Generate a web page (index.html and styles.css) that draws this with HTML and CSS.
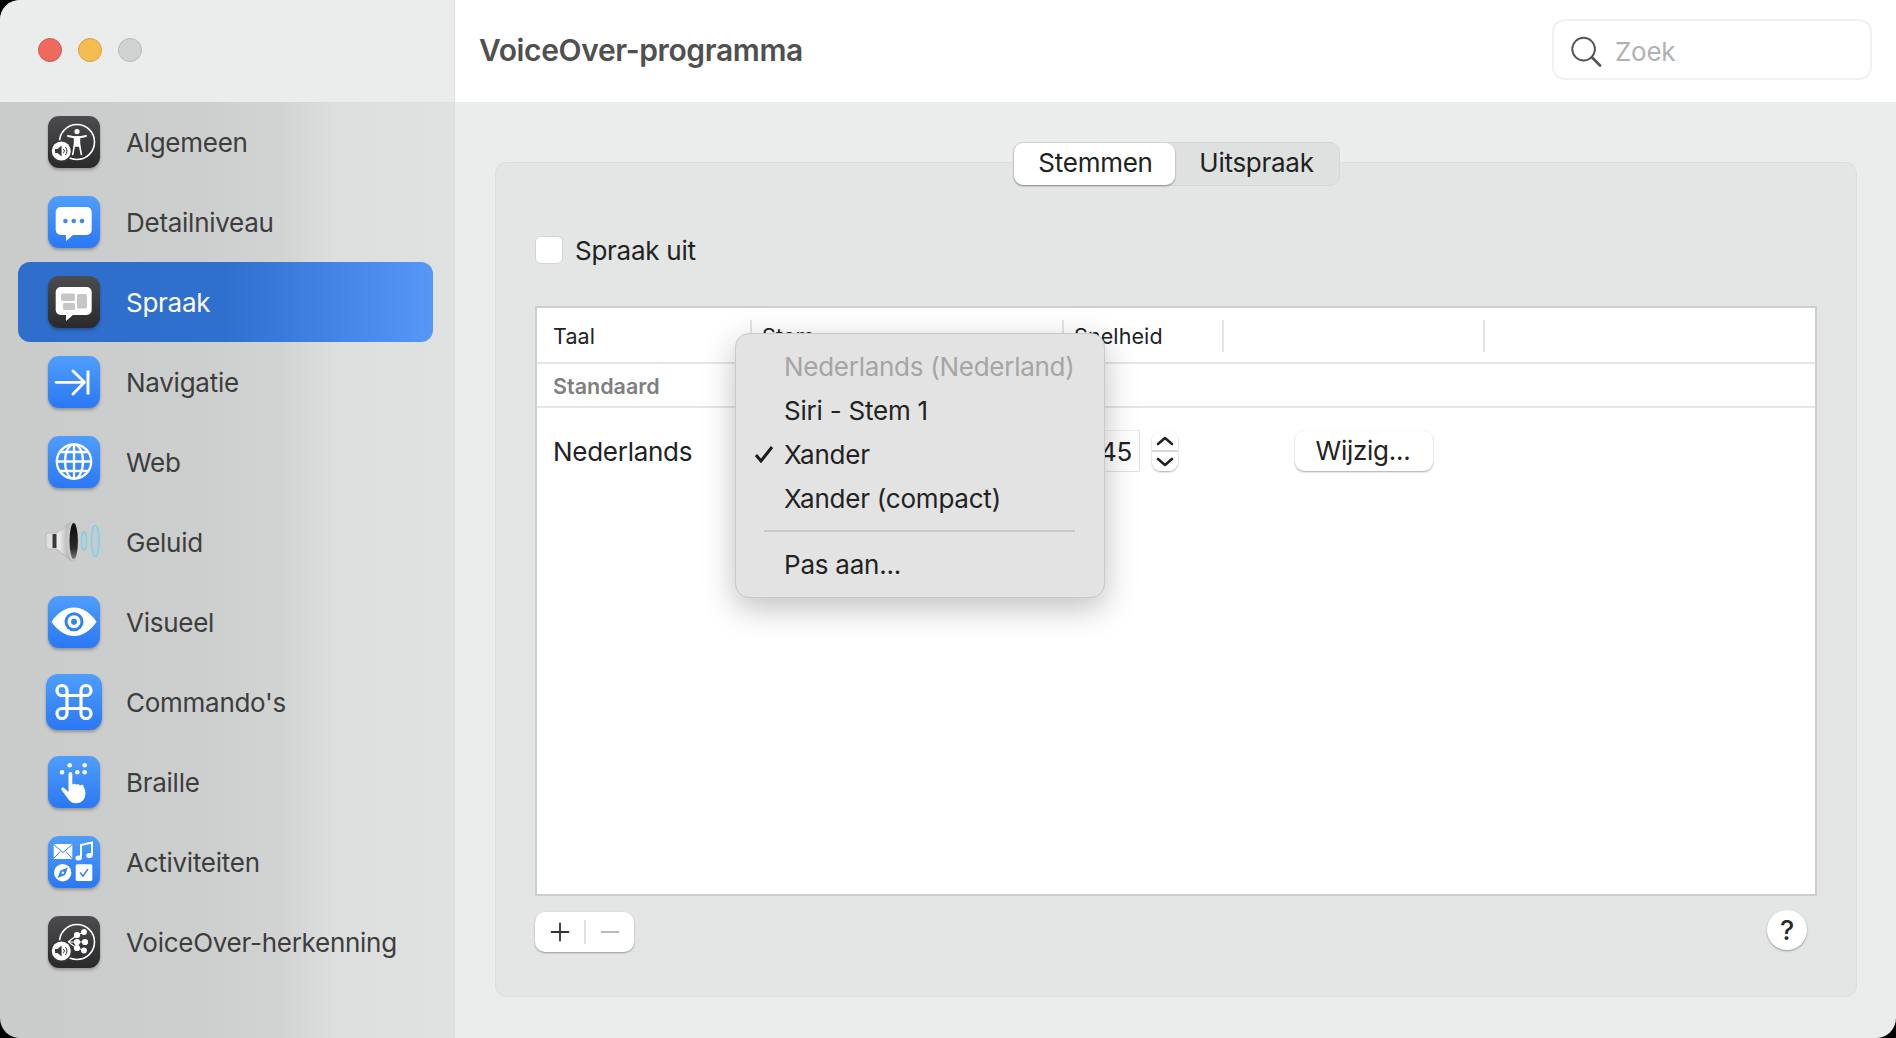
FILE: index.html
```html
<!DOCTYPE html>
<html lang="nl">
<head>
<meta charset="utf-8">
<title>VoiceOver-programma</title>
<link rel="stylesheet" href="styles.css">
</head>
<body>
<svg class="defs" width="0" height="0" aria-hidden="true">
  <defs>
    <linearGradient id="blue" x1="0" y1="0" x2="0" y2="1"><stop offset="0" stop-color="#4f9efc"/><stop offset="1" stop-color="#2a78f3"/></linearGradient>
    <linearGradient id="dark" x1="0" y1="0" x2="0" y2="1"><stop offset="0" stop-color="#4c4c4e"/><stop offset="1" stop-color="#2a2a2c"/></linearGradient>
    <linearGradient id="cone" x1="0" y1="0" x2="1" y2="0"><stop offset="0" stop-color="#dcdcdc"/><stop offset=".45" stop-color="#ececec"/><stop offset="1" stop-color="#8f8f8f"/></linearGradient>
    <linearGradient id="hole" x1="0" y1="0" x2="0" y2="1"><stop offset="0" stop-color="#0c0c0c"/><stop offset=".7" stop-color="#2a2a2a"/><stop offset="1" stop-color="#777"/></linearGradient>
    <g id="badge">
      <circle cx="13.3" cy="35" r="11" fill="#38383a"/>
      <circle cx="13.3" cy="35" r="9.5" fill="#fff"/>
      <path d="M7 33h2.6l4-3.4v10.8l-4-3.4H7z" fill="#38383a"/>
      <path d="M15.4 32.8a3.2 3.2 0 0 1 0 4.4M17.4 31a6 6 0 0 1 0 8" fill="none" stroke="#38383a" stroke-width="1"/>
    </g>
  </defs>
</svg>
<div class="window">
  <aside class="sidebar">
    <div class="traffic">
      <span class="light red"></span>
      <span class="light yellow"></span>
      <span class="light grey"></span>
    </div>
    <nav class="nav">
      <a class="row">
        <span class="slot"><svg class="ico" viewBox="0 0 52 52"><rect width="52" height="52" rx="11" fill="url(#dark)"/>
          <circle cx="29" cy="26" r="17.5" fill="none" stroke="#fff" stroke-width="1.6"/>
          <circle cx="29" cy="15.6" r="2.6" fill="#fff"/>
          <path d="M20 20l6 1.2h6l6-1.2" fill="none" stroke="#fff" stroke-width="2" stroke-linecap="round"/>
          <path d="M26.6 21v8l-2 9.5M31.4 21v8l2 9.5M27 21h4v9h-4z" fill="#fff" stroke="#fff" stroke-width="1.6" stroke-linecap="round"/>
          <use href="#badge"/></svg></span>
        <span class="label">Algemeen</span>
      </a>
      <a class="row">
        <span class="slot"><svg class="ico" viewBox="0 0 52 52"><rect width="52" height="52" rx="11" fill="url(#blue)"/>
          <path d="M12.7 11h26a5 5 0 0 1 5 5v18a5 5 0 0 1-5 5H25l-7 6v-6h-5.300a5 5 0 0 1-5-5V16a5 5 0 0 1 5-5z" fill="#fff"/>
          <circle cx="17.4" cy="25" r="2.3" fill="#3b88f6"/><circle cx="25.700" cy="25" r="2.3" fill="#3b88f6"/><circle cx="34" cy="25" r="2.3" fill="#3b88f6"/></svg></span>
        <span class="label">Detailniveau</span>
      </a>
      <a class="row active">
        <span class="slot"><svg class="ico" viewBox="0 0 52 52"><rect width="52" height="52" rx="11" fill="url(#dark)"/>
          <path d="M12.7 11h26a5 5 0 0 1 5 5v18a5 5 0 0 1-5 5H25l-7 6v-6h-5.300a5 5 0 0 1-5-5V16a5 5 0 0 1 5-5z" fill="#fff"/>
          <rect x="13" y="17.500" width="14" height="7.500" rx="1.500" fill="#c6c6c6"/><rect x="15" y="27" width="12" height="7" rx="1.500" fill="#c6c6c6"/><rect x="29" y="18" width="10" height="14.500" rx="1.500" fill="#c6c6c6"/></svg></span>
        <span class="label">Spraak</span>
      </a>
      <a class="row">
        <span class="slot"><svg class="ico" viewBox="0 0 52 52"><rect width="52" height="52" rx="11" fill="url(#blue)"/>
          <path d="M8 26.300h28M25 15l11.500 11.300L25 38" fill="none" stroke="#fff" stroke-width="2.800" stroke-linecap="round" stroke-linejoin="round"/>
          <path d="M40 14.500v24" stroke="#fff" stroke-width="3"/></svg></span>
        <span class="label">Navigatie</span>
      </a>
      <a class="row">
        <span class="slot"><svg class="ico" viewBox="0 0 52 52"><rect width="52" height="52" rx="11" fill="url(#blue)"/>
          <g fill="none" stroke="#fff" stroke-width="2.300"><circle cx="26" cy="25.500" r="17.200"/><ellipse cx="26" cy="25.500" rx="9" ry="17.200"/><path d="M26 8.300v34.400M8.800 25.500h34.400M11.500 16h29M11.500 35h29"/></g></svg></span>
        <span class="label">Web</span>
      </a>
      <a class="row">
        <span class="slot"><svg class="ico bare" viewBox="-3 0 58 52">
          <path d="M-2 20q0-3 3-3h8L22 6.500q3-1.500 5 0V44q-2 1.500-5 0L9 33H1q-3 0-3-3z" fill="url(#cone)" stroke="#a9a9a9" stroke-width=".6"/>
          <path d="M4.500 18h4v14h-4z" fill="#3a3a3a"/>
          <ellipse cx="24.700" cy="25" rx="6" ry="20" fill="#c9c9c9"/>
          <ellipse cx="25.700" cy="25" rx="4.200" ry="18" fill="url(#hole)"/>
          <g fill="#8ed4e6" fill-opacity=".28" stroke="#84cfe3" stroke-width="1.500"><ellipse cx="36" cy="25" rx="2.600" ry="9.500"/><ellipse cx="47.300" cy="25" rx="4" ry="15.500"/></g></svg></span>
        <span class="label">Geluid</span>
      </a>
      <a class="row">
        <span class="slot"><svg class="ico" viewBox="0 0 52 52"><rect width="52" height="52" rx="11" fill="url(#blue)"/>
          <path d="M3.500 25.700C10 16 18 11.500 26 11.500s16 4.500 22.500 14.200C42 35.500 34 40 26 40S10 35.500 3.500 25.700z" fill="#fff"/>
          <circle cx="26" cy="25.700" r="9.500" fill="#3183f4"/><circle cx="26" cy="25.700" r="6.500" fill="#fff"/><circle cx="26" cy="25.700" r="3" fill="#3183f4"/></svg></span>
        <span class="label">Visueel</span>
      </a>
      <a class="row">
        <span class="slot"><svg class="ico large" viewBox="0 0 56 56"><rect width="56" height="56" rx="12" fill="url(#blue)"/>
          <path d="M21 21V16.500a5 5 0 1 0-5 5H40a5 5 0 1 0-5-5V39.500a5 5 0 1 0 5-5H16a5 5 0 1 0 5 5z" fill="none" stroke="#fff" stroke-width="3.200"/></svg></span>
        <span class="label">Commando's</span>
      </a>
      <a class="row">
        <span class="slot"><svg class="ico" viewBox="0 0 52 52"><rect width="52" height="52" rx="11" fill="url(#blue)"/>
          <g fill="#fff"><circle cx="21.700" cy="9.300" r="2.300"/><circle cx="14" cy="16.300" r="2.300"/><circle cx="29.300" cy="16.300" r="2.300"/><circle cx="36.700" cy="9.300" r="2.300"/><circle cx="36.700" cy="16.300" r="2.300"/>
          <path d="M20.500 18a1.900 1.900 0 0 1 3.800 0v10.500l1-.2a1.800 1.800 0 0 1 3 .3l.5.200a1.700 1.700 0 0 1 3 .6l.6.100a1.700 1.700 0 0 1 3.100 .8c1.800 3 2.400 7 1.600 10-1 4.200-4.500 7-9 7-4 0-6.500-2-8.500-5l-6-8.300c-1-1.500 1-3.300 2.500-2l4.400 4z"/></g></svg></span>
        <span class="label">Braille</span>
      </a>
      <a class="row">
        <span class="slot"><svg class="ico" viewBox="0 0 52 52"><rect width="52" height="52" rx="11" fill="url(#blue)"/>
          <rect x="5.700" y="8" width="18.600" height="15" rx="1" fill="#fff"/>
          <path d="M5.700 8.500l9.300 8 9.300-8M5.700 22.500l6.500-7M24.300 22.500l-6.500-7" fill="none" stroke="#3183f4" stroke-width="1"/>
          <path d="M33 21.500V9l11-2.500V19" fill="none" stroke="#fff" stroke-width="2"/>
          <ellipse cx="30.600" cy="22" rx="3.200" ry="2.500" fill="#fff"/><ellipse cx="41.400" cy="19.500" rx="3.200" ry="2.500" fill="#fff"/>
          <circle cx="14.700" cy="36.700" r="8.700" fill="#fff"/><path d="M20 31.500l-7.500 3-3 7.500 7.500-3z" fill="#3183f4"/><circle cx="14.700" cy="36.700" r="1.300" fill="#fff"/>
          <rect x="27.700" y="28.300" width="16.600" height="16.700" rx="1.500" fill="#fff"/>
          <path d="M32 36.500l3 3.500 5-7" fill="none" stroke="#3183f4" stroke-width="1.400"/></svg></span>
        <span class="label">Activiteiten</span>
      </a>
      <a class="row">
        <span class="slot"><svg class="ico" viewBox="0 0 52 52"><rect width="52" height="52" rx="11" fill="url(#dark)"/>
          <circle cx="29" cy="26" r="17.500" fill="none" stroke="#fff" stroke-width="1.600"/>
          <g stroke="#fff" stroke-width="1.200" fill="#fff"><path d="M20 26l9-7 7-3M20 26h16M20 26l9 6 6 2" fill="none"/><circle cx="29" cy="19" r="2.500"/><circle cx="36" cy="16" r="2.300"/><circle cx="29" cy="26" r="2.500"/><circle cx="37" cy="26" r="2.500"/><circle cx="29" cy="32" r="2.500"/><circle cx="36" cy="34.500" r="2.300"/></g>
          <use href="#badge"/></svg></span>
        <span class="label">VoiceOver-herkenning</span>
      </a>
    </nav>
  </aside>
  <main class="main">
    <header class="header">
      <h1 class="title">VoiceOver-programma</h1>
      <div class="search">
        <svg class="search-icon" viewBox="0 0 32 32"><circle cx="13" cy="13" r="11.700" fill="none" stroke="#555" stroke-width="2"/><path d="M21.500 21.500L30 30" stroke="#555" stroke-width="2.800" stroke-linecap="round"/></svg>
        <span class="search-text">Zoek</span>
      </div>
    </header>
    <section class="content">
      <div class="panel">
        <div class="tabs">
          <span class="tab selected">Stemmen</span>
          <span class="tab">Uitspraak</span>
        </div>
        <label class="check"><span class="box"></span><span>Spraak uit</span></label>
        <div class="table">
          <div class="thead">
            <span class="th c1">Taal</span>
            <span class="th c2">Stem</span>
            <span class="th c3">Snelheid</span>
            <span class="th c4"></span>
            <span class="th c5"></span>
          </div>
          <div class="group">Standaard</div>
          <div class="tr">
            <span class="lang">Nederlands</span>
            <span class="rate">
              <span class="field">45</span>
              <span class="stepper">
                <svg viewBox="0 0 26 40"><path d="M6 13l7-6 7 6M6 28l7 6 7-6" fill="none" stroke="#222" stroke-width="2.600" stroke-linecap="round" stroke-linejoin="round"/></svg>
              </span>
            </span>
            <span class="change">Wijzig...</span>
          </div>
        </div>
        <div class="footer">
          <div class="addremove">
            <svg class="pm" viewBox="0 0 24 24"><path d="M2 12h20M12 2v20" stroke="#333" stroke-width="2"/></svg>
            <span class="pm-sep"></span>
            <svg class="pm" viewBox="0 0 24 24"><path d="M2 12h20" stroke="#b5b5b5" stroke-width="2"/></svg>
          </div>
          <span class="help">?</span>
        </div>
        <div class="menu">
          <div class="item disabled">Nederlands (Nederland)</div>
          <div class="item">Siri - Stem 1</div>
          <div class="item"><svg class="tick" viewBox="0 0 20 18"><path d="M2 10l5 6L18 2" fill="none" stroke="#1c1c1c" stroke-width="3"/></svg>Xander</div>
          <div class="item">Xander (compact)</div>
          <div class="menu-sep"></div>
          <div class="item">Pas aan...</div>
        </div>
      </div>
    </section>
  </main>
</div>
</body>
</html>
```
FILE: styles.css
```css
* { box-sizing: border-box; }
html, body { margin: 0; height: 100%; }
body {
  background: linear-gradient(#fff, #fff) right top / 50% 50% no-repeat, #000;
  font-family: Inter, "Liberation Sans", sans-serif;
  letter-spacing: -.27px;
  overflow: hidden;
}
.defs { position: absolute; }
.window {
  display: flex;
  width: 1896px;
  height: 1038px;
  border-radius: 20px;
  overflow: hidden;
}
.sidebar {
  width: 455px;
  flex: none;
  display: flex;
  flex-direction: column;
  border-right: 1px solid #dcdedd;
  background: linear-gradient(90deg, #cacccc 0%, #cdcfcf 45%, #d2d4d4 62%, #dcdfde 74%, #e0e2e1 100%);
}
.traffic {
  height: 102px;
  flex: none;
  display: flex;
  align-items: center;
  gap: 16px;
  padding: 0 0 2px 38px;
  background: #ebedec;
}
.light { width: 24px; height: 24px; border-radius: 50%; border: 1px solid; }
.red { background: #ee6a5f; border-color: #d5584e; }
.yellow { background: #f5bd4f; border-color: #d9a23c; }
.grey { background: #d1d3d2; border-color: #b8baba; }
.nav { display: flex; flex-direction: column; }
.row {
  height: 80px;
  margin-left: 18px;
  width: 415px;
  padding-left: 30px;
  display: flex;
  align-items: center;
  gap: 26px;
  border-radius: 12px;
  color: #3d3d3d;
}
.row.active {
  color: #fff;
  background: linear-gradient(90deg, #2f6ecb 0%, #2f6fce 50%, #5797f8 100%);
}
.slot { width: 52px; height: 52px; flex: none; display: flex; align-items: center; justify-content: center; }
.ico { width: 52px; height: 52px; flex: none; filter: drop-shadow(0 2px 1.500px rgba(0,0,0,.28)); overflow: visible; }
.ico.large { width: 56px; height: 56px; }
.ico.bare { width: 58px; filter: none; }
.label { font-size: 26px; line-height: 32px; padding-top: 2px; }
.main { flex: 1; display: flex; flex-direction: column; min-width: 0; }
.header {
  height: 102px;
  flex: none;
  background: #fff;
  display: flex;
  align-items: center;
  justify-content: space-between;
  padding: 0 24px 0 24px;
}
.title { margin: -3px 0 0; font-size: 30px; font-weight: 600; color: #505050; letter-spacing: -.38px; }
.search {
  width: 320px;
  height: 61px;
  margin-top: -3px;
  display: flex;
  align-items: center;
  gap: 13px;
  padding-left: 17px;
  border: 2px solid #f0f1f1;
  border-radius: 13px;
}
.search-icon { width: 31px; height: 32px; margin-top: 4px; }
.search-text { font-size: 26px; color: #b1b1b1; margin-top: 4px; }
.content { flex: 1; display: flex; background: #ebedec; padding: 60px 39px 41px 40px; min-height: 0; }
.panel {
  position: relative;
  flex: 1;
  display: flex;
  flex-direction: column;
  padding: 0 39px 44px 39px;
  background: #e4e6e5;
  border: 1px solid #dcdedd;
  border-radius: 11px;
}
.tabs {
  align-self: center;
  margin-top: -21px;
  height: 44px;
  display: flex;
  align-items: center;
  background: #dfe1e0;
  border: 1px solid #d6d8d7;
  border-radius: 10px;
}
.tab { height: 42px; display: flex; align-items: center; justify-content: center; width: 164px; padding-bottom: 4px; font-size: 26px; color: #222; border-radius: 9px; }
.tab.selected { width: 161px; padding-left: 3px; background: #fff; box-shadow: 0 1px 2px rgba(0,0,0,.4); }
.check { margin-top: 50px; height: 28px; display: flex; align-items: center; gap: 12px; font-size: 26px; color: #222; }
.box { width: 28px; height: 28px; background: #fff; border: 1px solid #d4d4d4; border-radius: 6px; }
.table {
  margin-top: 42px;
  flex: 1;
  display: flex;
  flex-direction: column;
  background: #fff;
  border: 2px solid #cdcfce;
}
.thead { height: 56px; flex: none; display: flex; align-items: center; border-bottom: 2px solid #e6e6e6; }
.th { height: 32px; margin-top: 2px; display: flex; align-items: center; font-size: 21.500px; letter-spacing: .1px; color: #222; padding-left: 10px; border-left: 2px solid #e4e4e4; }
.c1 { width: 213px; padding-left: 16px; border-left: 0; }
.c2 { width: 312px; }
.c3 { width: 160px; }
.c4 { width: 261px; }
.c5 { flex: 1; }
.group { height: 44px; flex: none; display: flex; align-items: center; padding: 2px 0 0 16px; font-size: 21.500px; letter-spacing: 0; font-weight: 600; color: #7f7f7f; border-bottom: 2px solid #e6e6e6; }
.tr { display: flex; align-items: center; padding-top: 22px; }
.lang { width: 526px; padding-left: 16px; font-size: 26px; color: #222; }
.rate { width: 220px; margin-left: -105px; display: flex; align-items: center; justify-content: flex-end; gap: 12px; flex: none; }
.field { width: 80px; height: 42px; display: flex; align-items: center; justify-content: flex-end; padding-right: 7px; font-size: 26px; color: #222; background: #fff; border: 1px solid #e2e2e2; border-left: 0; border-top: 1px solid #eee; }
.stepper { width: 26px; height: 40px; background: linear-gradient(#fff 48%, #d8d8d8 48%, #d8d8d8 52%, #fff 52%); border-radius: 9px; box-shadow: 0 1px 2px rgba(0,0,0,.35); }
.stepper svg { display: block; width: 26px; height: 40px; }
.change { margin-left: 117px; width: 138px; height: 40px; display: flex; align-items: center; justify-content: center; padding: 0 2px 2px 0; font-size: 26px; color: #222; background: #fff; border-radius: 9px; box-shadow: 0 1px 2px rgba(0,0,0,.35); }
.footer { margin-top: 14px; height: 42px; flex: none; display: flex; justify-content: space-between; }
.addremove {
  margin-top: 2px;
  width: 99px;
  height: 40px;
  display: flex;
  align-items: center;
  background: #fff;
  border-radius: 10px;
  box-shadow: 0 1px 2px rgba(0,0,0,.35);
}
.pm { width: 22px; height: 22px; margin-left: 14px; }
.pm-sep { width: 2px; height: 24px; background: #e0e0e0; margin-left: 13px; }
.pm-sep + .pm { margin-left: 13px; }
.help {
  margin-right: 10px;
  width: 40px;
  height: 40px;
  display: flex;
  align-items: center;
  justify-content: center;
  background: #fff;
  border-radius: 50%;
  font-size: 27px;
  font-weight: 500;
  color: #2a2a2a;
  box-shadow: 0 1px 2px rgba(0,0,0,.35);
}
.menu {
  position: absolute;
  left: 239px;
  top: 170px;
  width: 370px;
  padding: 10px 0 11px;
  background: #e3e3e3;
  border: 1px solid #c9c9c9;
  border-radius: 14px;
  box-shadow: 0 10px 32px rgba(0,0,0,.25);
}
.item { position: relative; height: 44px; display: flex; align-items: center; padding-left: 48px; font-size: 26px; letter-spacing: -.22px; color: #222; white-space: nowrap; }
.item.disabled { color: #a5a5a5; letter-spacing: -.27px; }
.tick { position: absolute; left: 18px; top: 13px; width: 20px; height: 18px; }
.menu-sep { height: 2px; margin: 10px 29px 10px 28px; background: #c8c8c8; }
```
